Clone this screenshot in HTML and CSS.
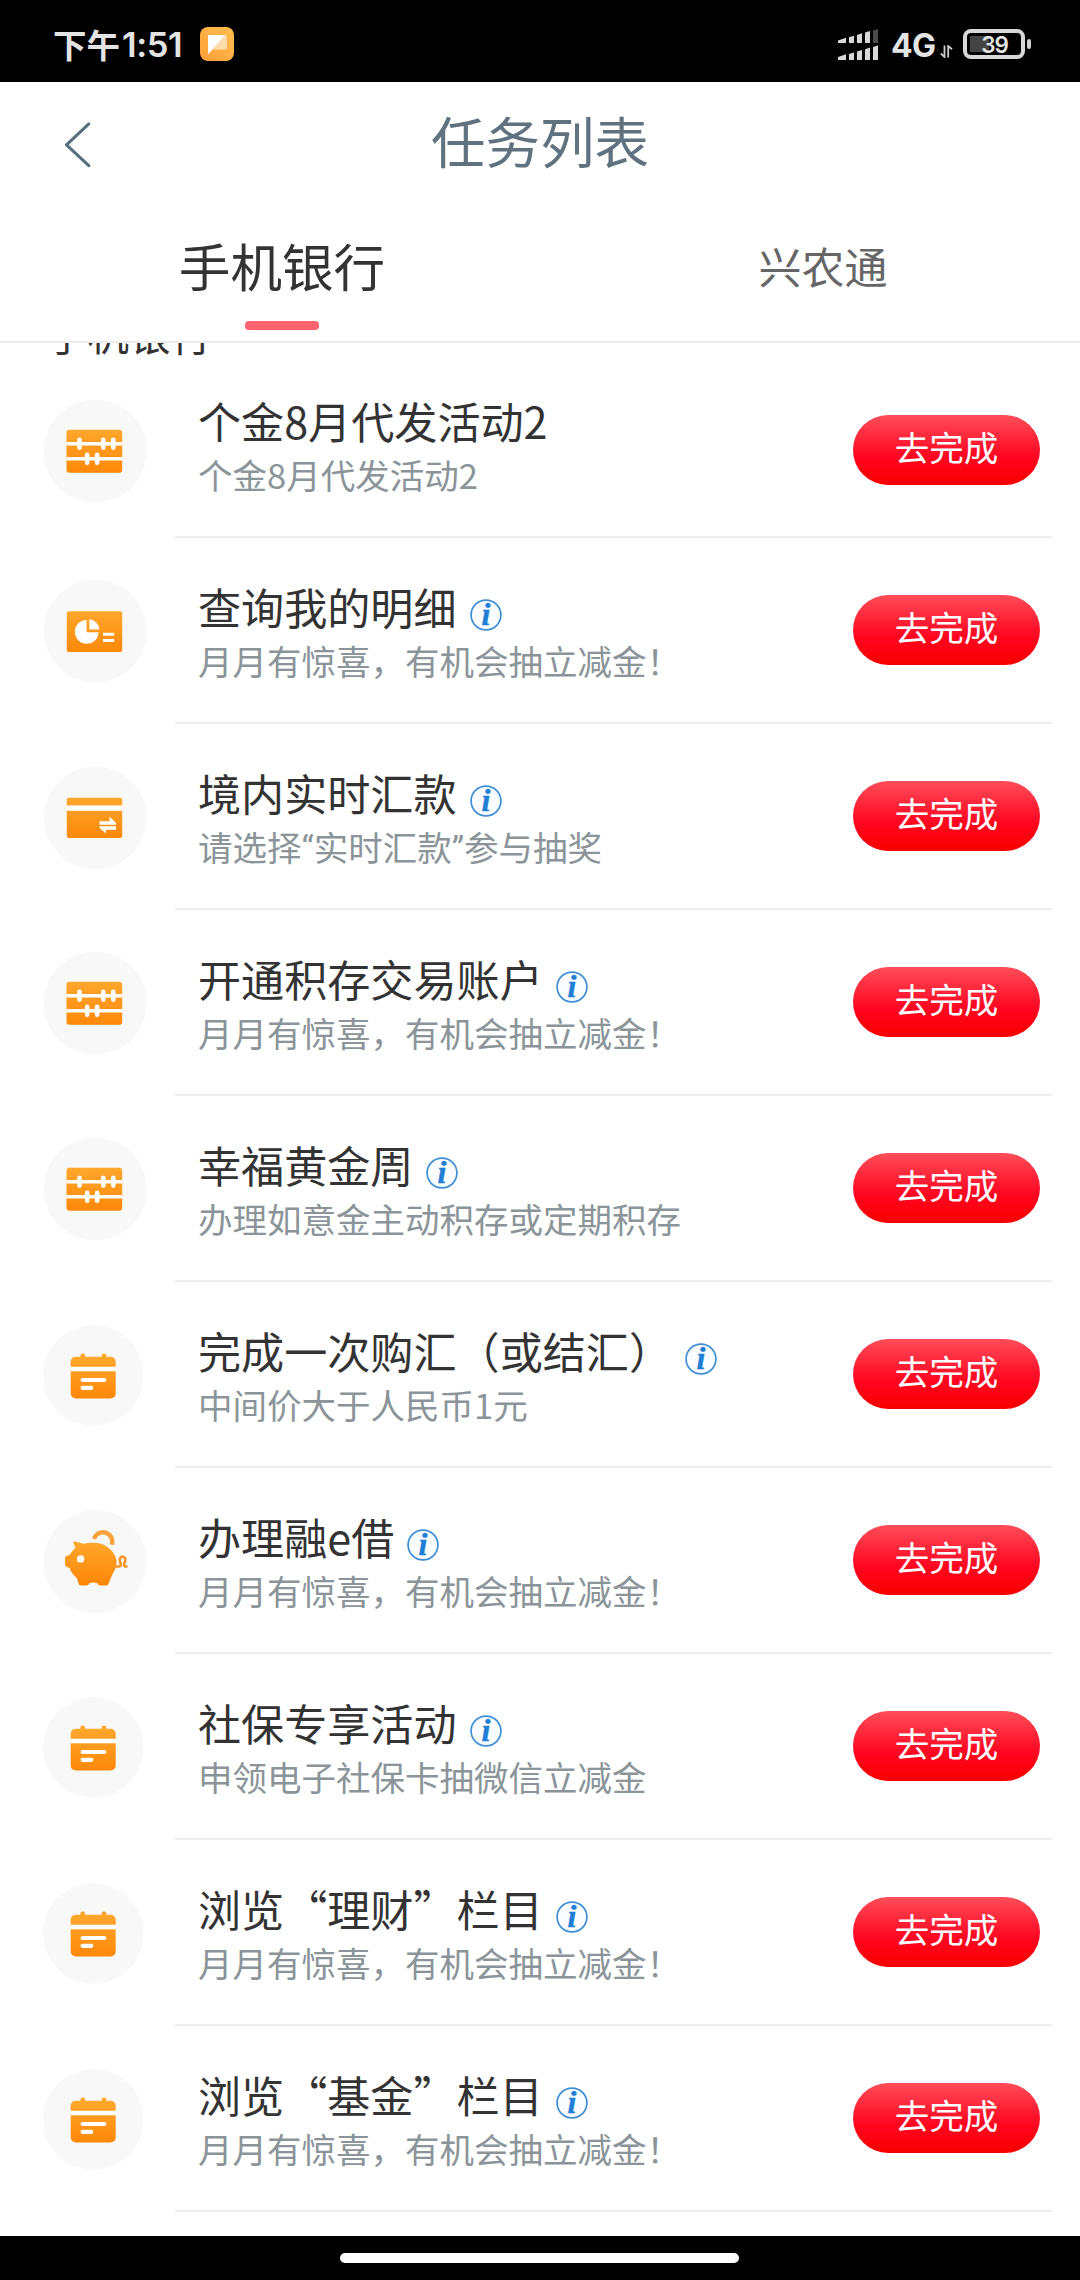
FILE: index.html
```html
<!DOCTYPE html>
<html lang="zh-CN">
<head>
<meta charset="utf-8">
<title>任务列表</title>
<link rel="stylesheet" href="styles.css">
</head>
<body>
<svg class="defs" width="0" height="0" aria-hidden="true">
  <defs>
    <linearGradient id="amber" gradientUnits="userSpaceOnUse" x1="0" y1="30" x2="0" y2="75">
      <stop offset="0" stop-color="#ffa82e"/><stop offset="1" stop-color="#fc8707"/>
    </linearGradient>
  </defs>
  <symbol id="abacus" viewBox="0 0 104 104">
    <circle cx="52.3" cy="52" r="51.5" fill="#f8f8f9"/>
    <rect x="23.5" y="30.7" width="55.7" height="43" rx="3" fill="url(#amber)"/>
    <g stroke="#fff" fill="none">
      <path stroke-width="3.6" d="M23.5 44.7H79.2M23.5 59.7H79.2"/>
      <path stroke-width="4.6" stroke-linecap="round" d="M36.5 40.8v7.8M60.3 40.8v7.8M70.3 40.8v7.8M44.2 55.9v7.8M54.2 55.9v7.8"/>
    </g>
  </symbol>
  <symbol id="report" viewBox="0 0 104 104">
    <circle cx="52.3" cy="52" r="51.5" fill="#f8f8f9"/>
    <rect x="23.8" y="32.3" width="55.4" height="40.6" rx="2" fill="url(#amber)"/>
    <path fill="#fff" d="M43.6 41v12.2H55.6A11.9 11.9 0 1 1 43.6 41Z"/>
    <path fill="#fff" d="M46.3 40.2A10.6 10.6 0 0 1 56.3 50.5H46.3Z"/>
    <path stroke="#fff" stroke-width="3" d="M60 55.3H71.2M60 61.5H71.2"/>
  </symbol>
  <symbol id="transfer" viewBox="0 -0.7 104 104">
    <circle cx="52.3" cy="52" r="51.3" fill="#f8f8f9"/>
    <rect x="23.8" y="32" width="55.4" height="40.4" rx="2" fill="url(#amber)"/>
    <rect x="23.5" y="39.7" width="56" height="5.4" fill="#fff"/>
    <path fill="#fff" d="M56.5 55.6H66.5V50.8L73 57.2V59H56.5ZM73 60.6H56.5V62.4L63 67.8V64H73Z"/>
  </symbol>
  <symbol id="calendar" viewBox="0 -2 104 104">
    <circle cx="50.3" cy="50.5" r="50.3" fill="#f8f8f9"/>
    <path d="M39.7 31V34M61 31V34" stroke="#ffa52b" stroke-width="4.8" stroke-linecap="round"/>
    <rect x="27.7" y="31.7" width="45" height="41.8" rx="5" fill="url(#amber)"/>
    <rect x="27.5" y="41.7" width="45.4" height="4.6" fill="#fff"/>
    <path d="M39.6 55H61.3M39.6 62.8H48.3" stroke="#fff" stroke-width="4.2" stroke-linecap="round"/>
  </symbol>
  <symbol id="piggy" viewBox="0 -0.5 104 104">
    <circle cx="52" cy="52" r="51.4" fill="#f8f8f9"/>
    <path fill="url(#amber)" d="M30.3 33.2C30.3 31.7 31.5 31.8 33 32.3L41 34.2C44 33.4 47 33.2 51 33.2C58 33.2 65 36.5 69.5 42.2C72.3 45.8 73.7 49 73.6 53C73.4 57.5 71.6 61.4 69.3 65L65.8 73.4C65.2 75 64.5 76 63 76H57C55.5 76 54.8 75.2 54.2 73.6C52.2 72.7 48.6 72.7 46.6 73.6C46 75.2 45.2 76 43.8 76H37.6C36.2 76 35.8 75 35.4 73.6L34 68.5C30.5 66 27.7 62.5 26.8 58.8L23.2 57C22.3 56.4 22 55 22 53V50C22 47.5 22.5 47 23.6 46.6L26.5 45.5C28.2 43 29.5 41 32.5 38.5Z"/>
    <circle cx="37.6" cy="49.4" r="3.7" fill="#fff"/>
    <path d="M50.8 29.4C53.8 22.8 59.7 21.6 64 23.8C68.5 26.2 69.8 30.6 69.2 35.2" stroke="#f9a13c" stroke-width="4.4" fill="none"/>
    <path d="M72.5 57H76.5C79 56 77.5 53.5 76.8 51.5C75.5 45.7 83.5 45.7 82.2 51.5C81.5 53.5 80 56 82 57H84.5" stroke="#f9952a" stroke-width="2.6" fill="none"/>
  </symbol>
  <symbol id="info" viewBox="0 0 32 32">
    <circle cx="16" cy="16" r="14.9" fill="#fafdff" stroke="#3f8ed6" stroke-width="1.7"/>
    <text x="16" y="26" text-anchor="middle" class="info-letter">i</text>
  </symbol>
</svg>

<div class="screen">
  <div class="status">
    <div class="clock"><span class="period">下午</span><span class="time">1:51</span></div>
    <svg class="app-badge" viewBox="0 0 34 34">
      <defs><linearGradient id="badge" x1="1" y1="0" x2="0" y2="1"><stop offset="0" stop-color="#ffbf4f"/><stop offset="1" stop-color="#ff9f39"/></linearGradient></defs>
      <rect width="34" height="34" rx="8" fill="url(#badge)"/>
      <path d="M8 8H25Q27 8 27 10V20Q27 22.5 25 22.5H13L8 27.5Z" fill="#ffdcae"/>
      <path d="M8 8H25L8 27Z" fill="#fff"/>
    </svg>
    <svg class="signal" viewBox="0 0 42 34">
      <g fill="#d8d8d8">
        <path d="M0 11.5L8 8.8V14H0ZM11 8.3L16 6.7V14H11ZM19 6L24 4.3V14H19ZM27 3.6L32 2V14H27Z"/>
        <path d="M0 28L8 25.3V31H0ZM11 25L16 23.4V31H11ZM19 22.6L24 21V31H19ZM27 20.3L32 18.6V31H27ZM35 18L40 16.5V31H35Z"/>
      </g>
      <path d="M35 1.5L40 0V14H35Z" fill="#4a4a4a"/>
    </svg>
    <span class="network">4G</span>
    <svg class="traffic" viewBox="0 0 13 13"><path d="M4.5 .5V12L.8 8.5M8.2 12.5V1L12 4.2" stroke="#ccc" stroke-width="1.8" fill="none"/></svg>
    <div class="battery"><span class="battery-text">39</span></div>
    <div class="battery-cap"></div>
  </div>

  <header class="titlebar">
    <svg class="back" viewBox="0 0 28 46"><path d="M24.8 1.8L2.5 22.8L24.8 43.6" fill="none" stroke="#587080" stroke-width="3.1" stroke-linecap="round" stroke-linejoin="round"/></svg>
    <h1>任务列表</h1>
  </header>

  <nav class="tabs">
    <div class="tab active">手机银行</div>
    <div class="tab">兴农通</div>
  </nav>

  <main class="content">
    <h2 class="section">手机银行</h2>
    <ul class="tasks">
      <li class="task compact"><svg class="icon"><use href="#abacus"/></svg><div class="body"><div class="text"><div class="name">个金8月代发活动2</div><div class="desc">个金8月代发活动2</div></div><button class="go">去完成</button></div></li>
      <li class="task"><svg class="icon"><use href="#report"/></svg><div class="body"><div class="text"><div class="name">查询我的明细<svg class="info"><use href="#info"/></svg></div><div class="desc">月月有惊喜，有机会抽立减金！</div></div><button class="go">去完成</button></div></li>
      <li class="task"><svg class="icon"><use href="#transfer"/></svg><div class="body"><div class="text"><div class="name">境内实时汇款<svg class="info"><use href="#info"/></svg></div><div class="desc">请选择<span class="quote">“</span>实时汇款<span class="quote">”</span>参与抽奖</div></div><button class="go">去完成</button></div></li>
      <li class="task"><svg class="icon"><use href="#abacus"/></svg><div class="body"><div class="text"><div class="name">开通积存交易账户<svg class="info"><use href="#info"/></svg></div><div class="desc">月月有惊喜，有机会抽立减金！</div></div><button class="go">去完成</button></div></li>
      <li class="task"><svg class="icon"><use href="#abacus"/></svg><div class="body"><div class="text"><div class="name">幸福黄金周<svg class="info"><use href="#info"/></svg></div><div class="desc">办理如意金主动积存或定期积存</div></div><button class="go">去完成</button></div></li>
      <li class="task"><svg class="icon"><use href="#calendar"/></svg><div class="body"><div class="text"><div class="name">完成一次购汇（或结汇）<svg class="info"><use href="#info"/></svg></div><div class="desc">中间价大于人民币1元</div></div><button class="go">去完成</button></div></li>
      <li class="task"><svg class="icon"><use href="#piggy"/></svg><div class="body"><div class="text"><div class="name">办理融e借<svg class="info"><use href="#info"/></svg></div><div class="desc">月月有惊喜，有机会抽立减金！</div></div><button class="go">去完成</button></div></li>
      <li class="task"><svg class="icon"><use href="#calendar"/></svg><div class="body"><div class="text"><div class="name">社保专享活动<svg class="info"><use href="#info"/></svg></div><div class="desc">申领电子社保卡抽微信立减金</div></div><button class="go">去完成</button></div></li>
      <li class="task"><svg class="icon"><use href="#calendar"/></svg><div class="body"><div class="text"><div class="name">浏览“理财”栏目<svg class="info"><use href="#info"/></svg></div><div class="desc">月月有惊喜，有机会抽立减金！</div></div><button class="go">去完成</button></div></li>
      <li class="task"><svg class="icon"><use href="#calendar"/></svg><div class="body"><div class="text"><div class="name">浏览“基金”栏目<svg class="info"><use href="#info"/></svg></div><div class="desc">月月有惊喜，有机会抽立减金！</div></div><button class="go">去完成</button></div></li>
    </ul>
  </main>

  <div class="homebar"><div class="pill"></div></div>
</div>
</body>
</html>
```
FILE: styles.css
```css
* { box-sizing: border-box; margin: 0; padding: 0; }
body { background: #fff; font-family: "Noto Sans CJK SC", sans-serif; }
.defs { display: block; }
.screen { width: 1080px; height: 2280px; display: flex; flex-direction: column; overflow: hidden; background: #fff; }

.status { height: 82px; flex: none; background: #000; color: #e4e4e4; display: flex; align-items: center; padding: 6px 49px 0 53px; }
.clock { display: flex; align-items: center; width: 147px; line-height: 40px; }
.period { font-size: 33.5px; font-weight: 700; }
.time { font-family: Inter, sans-serif; font-size: 34.5px; font-weight: 600; margin: 2px 0 0 2px; letter-spacing: -0.4px; }
.app-badge { width: 34px; height: 34px; }
.signal { width: 42px; height: 34px; margin-left: 604px; margin-top: 4px; }
.network { font-family: Inter, sans-serif; font-size: 32px; font-weight: 700; line-height: 40px; width: 48px; margin: 3px 0 0 11px; letter-spacing: -0.6px; }
.traffic { width: 13px; height: 13px; margin-top: 15px; margin-left: 1px; }
.battery { width: 62px; height: 30px; margin-left: 10px; border: 4px solid #d8d8d8; border-radius: 8px; padding: 3px 2px 1px 3px; display: flex; align-items: center; justify-content: center; background: linear-gradient(#444, #444) 3px 3px / 19px 16px no-repeat #000; }
.battery-text { font-family: Inter, sans-serif; font-size: 22.5px; font-weight: 600; line-height: 22px; letter-spacing: -1.2px; }
.battery-cap { width: 4px; height: 10px; margin-left: 2px; border-radius: 2px; background: #d0d0d0; }

.titlebar { height: 125px; flex: none; display: grid; grid-template-columns: 64px 1fr 64px; align-items: center; }
.back { width: 28px; height: 46px; margin-left: 64px; }
.titlebar h1 { font-size: 54.5px; font-weight: 400; line-height: 70px; text-align: center; color: #607280; margin-top: -9px; }

.tabs { height: 136px; flex: none; display: grid; grid-template-columns: 541px 541px; padding-left: 11.5px; border-bottom: 2px solid #ececec; }
.tab { display: flex; flex-direction: column; align-items: center; font-size: 43px; line-height: 60px; padding-top: 28px; color: #666; }
.tab.active { font-size: 51.6px; color: #333; }
.tab.active::after { content: ""; width: 74px; height: 9px; margin-top: 26px; border-radius: 4px; background: #ff6370; }

.content { flex: 1; min-height: 0; overflow: hidden; display: flex; flex-direction: column; justify-content: flex-end; padding-bottom: 24px; }
.section { flex: none; font-size: 41.5px; font-weight: 400; line-height: 60px; color: #333; padding-left: 46px; margin-bottom: 1px; }
.tasks { flex: none; list-style: none; }
.task { height: 186px; display: grid; grid-template-columns: 175px 1fr; align-items: center; margin-right: 28px; }
.task.compact { height: 174px; }
.icon { display: block; width: 104px; height: 104px; margin-left: 43px; }
.body { height: 100%; display: flex; align-items: center; justify-content: space-between; padding: 0 12px 0 23px; border-bottom: 2px solid #ededed; }
.text { align-self: flex-end; padding-bottom: 37px; white-space: nowrap; }
.name { display: flex; align-items: center; gap: 13px; height: 58px; font-size: 43.1px; line-height: 58px; color: #333; }
.desc { height: 50px; font-size: 34.5px; line-height: 50px; color: #8a9499; }
.quote { font-family: Roboto, sans-serif; line-height: 1; }
.info { width: 32px; height: 32px; margin-top: 18px; }
.info-letter { font: italic 700 32px "Liberation Serif", serif; fill: #1f7fd6; stroke: #1f7fd6; stroke-width: 0.5px; }
.go { width: 187px; height: 70px; flex: none; border: 0; border-radius: 35px; background: linear-gradient(#ff4d5a, #ff0520 60%, #f80000); color: #fff; font: 400 34.5px/50px "Noto Sans CJK SC", sans-serif; padding-bottom: 8px; }

.homebar { height: 44px; flex: none; background: #000; display: flex; justify-content: center; padding: 17px 1px 0 0; }
.pill { width: 399px; height: 10px; border-radius: 5px; background: #fff; }
```
